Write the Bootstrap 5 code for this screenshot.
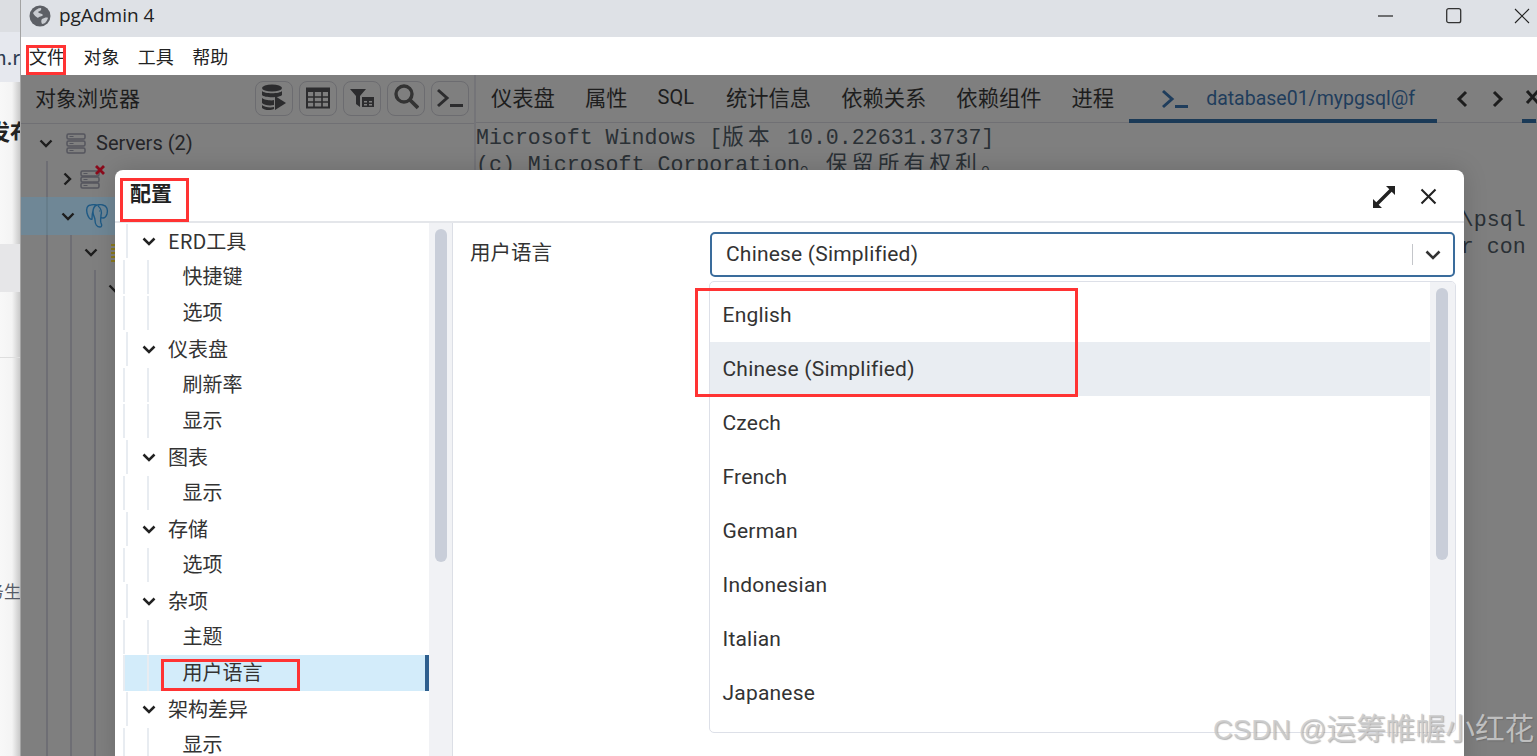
<!DOCTYPE html>
<html lang="zh-CN">
<head>
<meta charset="utf-8">
<title>pgAdmin 4</title>
<link rel="stylesheet" href="https://cdn.jsdelivr.net/npm/bootstrap@5.3.0/dist/css/bootstrap.min.css">
<style>
html,body{height:756px;overflow:hidden;}
body{font-family:Roboto,"Noto Sans CJK SC",sans-serif;color:#222;background:#fff;}
.pg-stage{height:756px;width:1537px;position:relative;overflow:hidden;}
.pg-side{width:20px;flex:none;overflow:hidden;background:linear-gradient(90deg,#f8f8f8 0,#f4f4f4 60%,#c9c9c9 100%);}
.pg-side-a{height:32px;background:#dcdee2;}
.pg-side-b{height:50px;background:#e6e8ee;font-size:20px;color:#2c3c50;line-height:50px;}
.pg-side-c{height:162px;padding-top:32px;font-size:22px;font-weight:700;color:#222;}
.pg-side-c span{margin-right:-12px;}
.pg-side-d{height:48px;background:#e6e6e8;}
.pg-side-e{height:66px;border-bottom:1px solid #dedede;}
.pg-side-f{padding-top:219px;font-size:17px;color:#555a66;line-height:28px;}
.pg-side-f span{margin-right:-1px;}
.pg-clip{white-space:nowrap;display:flex;justify-content:flex-end;font-family:"Noto Sans CJK SC",sans-serif;}
.pg-win{width:1517px;flex:none;border-left:1px solid #a3a3a3;}
.pg-title{height:37px;background:#dee1e6;padding-bottom:6px;}
.pg-title-text{font-size:19px;margin-left:8px;color:#222;font-family:"Open Sans",sans-serif;}
.pg-ctrl{margin-right:0;}
.pg-menu{height:38px;background:#fff;font-size:18px;padding-left:8px;gap:18.4px;color:#222;font-family:"Noto Sans CJK SC",sans-serif;}
.pg-dark{height:681px;background:#7f7f7f;color:#1d1d1d;}
.pg-left{width:455px;flex:none;border-right:2px solid #747478;}
.pg-phead{height:49px;border-bottom:1px solid #707074;padding:0 5px 2px 14px;}
.pg-phead-t{font-size:21px;font-family:"Noto Sans CJK SC",sans-serif;color:#1d1d1d;}
.pg-tool{width:38px;height:35px;padding:0;border:1px solid #6c6c70;border-radius:8px;background:transparent;margin-left:6px;display:flex;align-items:center;justify-content:center;}
.pg-otree{font-size:20px;color:#252528;padding-top:1px;}
.pg-orow{height:36px;display:flex;align-items:center;flex:none;position:relative;}
.pg-orow-sel{background:#6f8796;height:38px;}
.pg-ind{width:24px;flex:none;align-self:stretch;border-left:2px solid #6e6e74;}
.pg-ind0{width:25px;flex:none;}
.pg-fill{flex:1;align-items:stretch;height:auto;}
.pg-tabs{height:48px;border-bottom:1px solid #707074;padding-left:15px;font-family:"Noto Sans CJK SC",sans-serif;font-size:21.3px;}
.pg-tab{color:#1d1d1d;padding:0;margin-right:30px;line-height:46px;margin-top:-4px;}
.pg-tab-latin{font-family:Roboto,sans-serif;font-size:20px;margin-right:32px;}
.pg-tab-on{width:308px;margin-left:-15px;margin-right:19px;padding-left:32px;padding-top:5px;height:48px;border-bottom:4px solid #1b3a57;color:#1f3d5c;font-family:Roboto,sans-serif;font-size:19.5px;display:flex;align-items:center;white-space:nowrap;overflow:hidden;flex:none;}
.pg-tabx{flex:none;width:14px;height:48px;border-bottom:4px solid #1b3a57;display:flex;align-items:center;margin-left:-2px;}
.pg-term{font-family:"Liberation Mono",monospace;font-size:21.6px;line-height:27.2px;white-space:pre;color:#2a3035;margin:2px 0 0;overflow:hidden;height:200px;background:transparent;}
.pg-term-cjk{letter-spacing:4.3px;font-family:"Noto Sans CJK SC",monospace;line-height:0;}
.pg-dlg{position:absolute;left:115px;top:170px;width:1349px;height:600px;background:#fff;border-radius:8px 8px 0 0;box-shadow:0 0 24px rgba(0,0,0,.16);}
.pg-dhead{height:53px;border-bottom:2px solid #e4e6ea;padding:2px 27px 0 15px;}
.pg-dhead-t{font-size:21px;font-weight:700;color:#222;font-family:"Noto Sans CJK SC",sans-serif;line-height:1;margin-top:-8px;}
.pg-dtree{width:314px;flex:none;font-size:20px;font-family:"Noto Sans CJK SC",Roboto,sans-serif;color:#333;}
.pg-drow{height:36px;display:flex;align-items:center;white-space:nowrap;}
.pg-dp{padding-left:27px;gap:12px;background:linear-gradient(#e8ecf1,#e8ecf1) 11px 1px/2px 34px no-repeat;}
.pg-dc{padding-left:67.500px;padding-bottom:2px;background:linear-gradient(#e8ecf1,#e8ecf1) 8px 1px/2px 34px no-repeat,linear-gradient(#e8ecf1,#e8ecf1) 32px 1px/2px 34px no-repeat;}
.pg-dsel{background:linear-gradient(#e8ecf1,#e8ecf1) 8px 0/2px 36px no-repeat,linear-gradient(#e8ecf1,#e8ecf1) 32px 0/2px 36px no-repeat,linear-gradient(#d3ecfa,#d3ecfa) 9px 0/100% 100% no-repeat;border-right:4px solid #2e5f8e;color:#333;}
.pg-track{width:24px;flex:none;background:#f1f2f5;border-right:1px solid #dcdfe6;padding:6px 5px 0 6px;}
.pg-thumb{width:12px;background:#c9ced9;border-radius:6px;}
.pg-pane{flex:1;position:relative;padding:9px 9px 0 17px;}
.pg-lbl{width:240px;flex:none;font-size:20.5px;line-height:36px;margin-top:1px;color:#333;font-family:"Noto Sans CJK SC",sans-serif;}
.pg-sel{width:745px;height:45px;border:2px solid #3a6c9c;border-radius:5px;font-size:21px;letter-spacing:.2px;color:#333;padding:0 0 0 14px;margin-left:0;}
.pg-sel-sep{width:1px;height:21px;background:#c4c6ca;margin-right:12px;}
.pg-sel-chev{margin-right:12px;}
.pg-drop{position:absolute;left:256px;top:58px;width:747px;height:452px;border:1px solid #dde0e8;border-radius:5px;background:#fff;overflow:hidden;padding-top:6px;}
.pg-opts{width:721px;flex:none;}
.pg-opt{height:54px;padding:0 0 0 12.500px;border:0;font-size:21px;letter-spacing:.2px;line-height:54px;color:#333;background:#fff;border-radius:0!important;}
.pg-opt-on{background:#e9edf2;}
.pg-droptrack{position:absolute;right:0;top:0;bottom:0;width:25px;background:#f1f2f5;padding:6px 7px 0 6px;}
.pg-mark{position:absolute;border:3px solid #f33;pointer-events:none;}
.pg-mk1{left:26px;top:45px;width:40px;height:30px;}
.pg-mk2{left:120px;top:178px;width:69px;height:44px;}
.pg-mk3{left:161px;top:659px;width:139px;height:32px;}
.pg-mk4{left:695px;top:288px;width:383px;height:109px;}
.pg-wm{position:absolute;left:1213px;top:708px;font-size:29.7px;line-height:42px;color:rgba(205,205,205,.85);text-shadow:1px 1px 1px rgba(90,90,90,.45);white-space:nowrap;font-family:"Liberation Sans","Noto Sans CJK SC",sans-serif;pointer-events:none;}
.pg-wm span{font-size:27.5px;}
</style>
</head>
<body>
<div class="pg-stage d-flex">
  <div class="pg-side d-flex flex-column">
    <div class="pg-side-a"></div>
    <div class="pg-side-b pg-clip">n.r</div>
    <div class="pg-side-c pg-clip"><span>发布</span></div>
    <div class="pg-side-d"></div>
    <div class="pg-side-e"></div>
    <div class="pg-side-f pg-clip"><span>务生</span></div>
  </div>
  <div class="pg-win d-flex flex-column">
    <div class="pg-title d-flex align-items-center">
      <svg width="22" height="22" viewBox="0 0 22 22" class="ms-2"><circle cx="11" cy="11" r="10.5" fill="#5d6066"/><path d="M4 8c2-3 5-5 8-5 1 2-1 3-3 4 1 2 4 1 5 3-1 2-4 1-5 3-2-1-4-3-5-5zM13 14c2-1 5-2 6-1-1 3-3 6-6 6-1-2-1-4 0-5z" fill="#c9ccd1"/></svg>
      <span class="pg-title-text">pgAdmin 4</span>
      <div class="ms-auto pg-ctrl d-flex align-items-center">
        <svg width="16" height="16" viewBox="0 0 16 16" style="margin-right:52px"><path d="M0 8h15" stroke="#222" stroke-width="1.2"/></svg>
        <svg width="16" height="16" viewBox="0 0 16 16" style="margin-right:52px"><rect x=".7" y=".7" width="14" height="14" rx="2" fill="none" stroke="#333" stroke-width="1.3"/></svg>
        <svg width="16" height="16" viewBox="0 0 16 16" style="margin-right:7px"><path d="M1 1l14 14M15 1L1 15" stroke="#222" stroke-width="1.1"/></svg>
      </div>
    </div>
    <div class="pg-menu d-flex align-items-center">
      <span>文件</span><span>对象</span><span>工具</span><span>帮助</span>
    </div>
    <div class="pg-dark d-flex">
      <div class="pg-left d-flex flex-column">
        <div class="pg-phead d-flex align-items-center">
          <span class="pg-phead-t me-auto">对象浏览器</span>
          <button class="btn pg-tool" type="button"><svg width="26" height="28" viewBox="0 0 26 28" fill="#2c2c2e"><ellipse cx="11" cy="4" rx="10" ry="3.6"/><path d="M1 7c2 3 18 3 20 0v4c-2 3-18 3-20 0zM1 14c2 2 10 3 12 2v5c-5 1-10 0-12-2zM1 21c2 2 8 3 12 2v2c-4 2-10 1-12-1z"/><path d="M14 12l11 7-11 7z"/></svg></button>
          <button class="btn pg-tool" type="button"><svg width="24" height="22" viewBox="0 0 24 22"><rect x="1" y="1.500" width="22" height="19" fill="none" stroke="#2c2c2e" stroke-width="2"/><path d="M1 3h22" stroke="#2c2c2e" stroke-width="4"/><path d="M1 10h22M1 15h22M8 5v15M16 5v15" stroke="#2c2c2e" stroke-width="1.6"/></svg></button>
          <button class="btn pg-tool" type="button"><svg width="24" height="20" viewBox="0 0 24 20" fill="#2c2c2e"><path d="M0 1h16l-6 7v11l-4-3V8z"/><rect x="12" y="9" width="12" height="10" fill="#7f7f7f"/><path d="M12 9h12v10H12zM14 13v1.500h3V13zm5 0v1.500h3V13zm-5 3v1.500h3V16zm5 0v1.500h3V16z" fill-rule="evenodd"/></svg></button>
          <button class="btn pg-tool" type="button"><svg width="26" height="28" viewBox="0 0 26 28"><circle cx="11" cy="10" r="8" fill="none" stroke="#333" stroke-width="3.400"/><path d="M17 16l8 8" stroke="#333" stroke-width="3.800"/></svg></button>
          <button class="btn pg-tool" type="button"><svg width="28" height="22" viewBox="0 0 28 22" fill="none" stroke="#2c2c2e"><path d="M2 3l9 8-9 8" stroke-width="3"/><path d="M14 18.500h13" stroke-width="3"/></svg></button>
        </div>
        <div class="pg-otree d-flex flex-column flex-grow-1">
          <div class="pg-orow mt-0">
            <span class="pg-ind0"></span>
            <svg width="14" height="9" viewBox="0 0 14 9" style="margin-left:-7px"><path d="M1.500 1.500L7 7l5.500-5.500" fill="none" stroke="#1d1d1d" stroke-width="2.400"/></svg>
            <svg width="20" height="21" viewBox="0 0 20 21" style="margin-left:13px" fill="none" stroke="#55565e" stroke-width="1.500"><rect x="1" y="1" width="18" height="5" rx="1.500"/><rect x="1" y="8" width="18" height="5" rx="1.500"/><rect x="1" y="15" width="18" height="5" rx="1.500"/><path d="M3.500 3.500h4M3.500 10.500h4M3.500 17.500h4" stroke-width="1"/></svg>
            <span style="margin-left:10px">Servers (2)</span>
          </div>
          <div class="pg-orow">
            <span class="pg-ind0"></span><span class="pg-ind"></span>
            <svg width="9" height="14" viewBox="0 0 9 14" style="margin-left:-7px"><path d="M1.500 1.500L7 7l-5.500 5.500" fill="none" stroke="#1d1d1d" stroke-width="2.400"/></svg>
            <svg width="26" height="25" viewBox="0 0 26 25" style="margin-left:8px;margin-top:-3px" fill="none" stroke="#55565e" stroke-width="1.500"><rect x="1" y="6" width="18" height="5" rx="1.500"/><rect x="1" y="12" width="18" height="5" rx="1.500"/><rect x="1" y="18" width="18" height="5" rx="1.500"/><path d="M3.500 8.500h4M3.500 14.500h4M3.500 20.500h4" stroke-width="1"/><path d="M16 1l8 8M24 1l-8 8" stroke="#8b0b1c" stroke-width="2.800"/></svg>
          </div>
          <div class="pg-orow pg-orow-sel">
            <span class="pg-ind0"></span><span class="pg-ind" style="border-color:#667d8b"></span>
            <svg width="14" height="9" viewBox="0 0 14 9" style="margin-left:-9px"><path d="M1.500 1.500L7 7l5.500-5.500" fill="none" stroke="#1d1d1d" stroke-width="2.400"/></svg>
            <svg width="24" height="26" viewBox="0 0 24 26" style="margin-left:10px" fill="none" stroke="#1f5a85" stroke-width="1.400"><path d="M6 2C2 2 1 6 2 10c1 4 3 7 5 6 0-3 0-5 1-8M6 2c2-1 4 0 6 0s4-1 6 0c4 1 5 5 4 9-1 3-2 4-4 4-1 0-2 0-2-1M12 2c-3 1-4 4-4 7 0 4 2 5 2 8 0 4 2 7 5 7 2 0 2-2 1-4-1-3 0-5 0-8 1-3 0-7-3-9M14 8h.6"/></svg>
          </div>
          <div class="pg-orow" style="height:35px">
            <span class="pg-ind0"></span><span class="pg-ind"></span><span class="pg-ind" style="width:14px"></span>
            <svg width="14" height="9" viewBox="0 0 14 9"><path d="M1.500 1.500L7 7l5.500-5.500" fill="none" stroke="#1d1d1d" stroke-width="2.400"/></svg>
            <svg width="10" height="20" viewBox="0 0 10 20" style="margin-left:12px"><path d="M1 2h8M1 6h8M1 10h8M1 14h8M1 18h8" stroke="#8a7a1e" stroke-width="2.200"/></svg>
          </div>
          <div class="pg-orow">
            <span class="pg-ind0"></span><span class="pg-ind"></span><span class="pg-ind"></span><span class="pg-ind" style="width:14px"></span>
            <svg width="14" height="9" viewBox="0 0 14 9"><path d="M1.500 1.500L7 7l5.500-5.500" fill="none" stroke="#1d1d1d" stroke-width="2.400"/></svg>
          </div>
          <div class="pg-orow pg-fill">
            <span class="pg-ind0"></span><span class="pg-ind"></span><span class="pg-ind"></span><span class="pg-ind"></span>
          </div>
        </div>
      </div>
      <div class="flex-grow-1 d-flex flex-column overflow-hidden">
        <nav class="pg-tabs d-flex align-items-center flex-nowrap">
          <span class="pg-tab">仪表盘</span>
          <span class="pg-tab">属性</span>
          <span class="pg-tab pg-tab-latin">SQL</span>
          <span class="pg-tab">统计信息</span>
          <span class="pg-tab">依赖关系</span>
          <span class="pg-tab">依赖组件</span>
          <span class="pg-tab">进程</span>
          <span class="pg-tab-on"><svg width="28" height="20" viewBox="0 0 28 20" fill="none" stroke="#1f3d5c" style="margin-right:17px;flex:none"><path d="M2 2l9 8-9 8" stroke-width="3"/><path d="M14 17.500h13" stroke-width="3"/></svg>database01/mypgsql@f</span>
          <svg width="12" height="18" viewBox="0 0 12 18" style="flex:none;margin-right:24px"><path d="M10 2L3 9l7 7" fill="none" stroke="#1d1d1d" stroke-width="3"/></svg>
          <svg width="12" height="18" viewBox="0 0 12 18" style="flex:none;margin-right:20px"><path d="M2 2l7 7-7 7" fill="none" stroke="#1d1d1d" stroke-width="3"/></svg>
          <span class="pg-tabx"><svg width="16" height="16" viewBox="0 0 16 16" style="flex:none;margin-left:3px"><path d="M2 2l11 12M13 2L2 14" stroke="#1d1d1d" stroke-width="3"/></svg></span>
        </nav>
        <pre class="pg-term">Microsoft Windows [<span class="pg-term-cjk">版本</span> 10.0.22631.3737]
(c) Microsoft Corporation<span class="pg-term-cjk">。保留所有权利。</span>

                                                                            \psql
                                                                            r con</pre>
      </div>
    </div>
  </div>

  <div class="pg-dlg d-flex flex-column">
    <div class="pg-dhead d-flex align-items-center">
      <span class="pg-dhead-t me-auto">配置</span>
      <svg width="24" height="24" viewBox="0 0 24 24" style="margin-right:24px"><path d="M14 1h9v9l-3.300-3.300L6.700 19.700 10 23H1v-9l3.300 3.300L17.300 4.300z" fill="#222"/></svg>
      <svg width="17" height="17" viewBox="0 0 17 17"><path d="M1.500 1.500l14 14M15.500 1.500l-14 14" stroke="#222" stroke-width="2.100"/></svg>
    </div>
    <div class="d-flex flex-grow-1 overflow-hidden">
      <div class="pg-dtree">
        <div class="pg-drow pg-dp"><svg width="14" height="9" viewBox="0 0 14 9"><path d="M1.500 1.500L7 7l5.500-5.500" fill="none" stroke="#222" stroke-width="2.500"/></svg><span>ERD工具</span></div>
        <div class="pg-drow pg-dc">快捷键</div>
        <div class="pg-drow pg-dc">选项</div>
        <div class="pg-drow pg-dp"><svg width="14" height="9" viewBox="0 0 14 9"><path d="M1.500 1.500L7 7l5.500-5.500" fill="none" stroke="#222" stroke-width="2.500"/></svg><span>仪表盘</span></div>
        <div class="pg-drow pg-dc">刷新率</div>
        <div class="pg-drow pg-dc">显示</div>
        <div class="pg-drow pg-dp"><svg width="14" height="9" viewBox="0 0 14 9"><path d="M1.500 1.500L7 7l5.500-5.500" fill="none" stroke="#222" stroke-width="2.500"/></svg><span>图表</span></div>
        <div class="pg-drow pg-dc">显示</div>
        <div class="pg-drow pg-dp"><svg width="14" height="9" viewBox="0 0 14 9"><path d="M1.500 1.500L7 7l5.500-5.500" fill="none" stroke="#222" stroke-width="2.500"/></svg><span>存储</span></div>
        <div class="pg-drow pg-dc">选项</div>
        <div class="pg-drow pg-dp"><svg width="14" height="9" viewBox="0 0 14 9"><path d="M1.500 1.500L7 7l5.500-5.500" fill="none" stroke="#222" stroke-width="2.500"/></svg><span>杂项</span></div>
        <div class="pg-drow pg-dc">主题</div>
        <div class="pg-drow pg-dc pg-dsel">用户语言</div>
        <div class="pg-drow pg-dp"><svg width="14" height="9" viewBox="0 0 14 9"><path d="M1.500 1.500L7 7l5.500-5.500" fill="none" stroke="#222" stroke-width="2.500"/></svg><span>架构差异</span></div>
        <div class="pg-drow pg-dc">显示</div>
      </div>
      <div class="pg-track"><div class="pg-thumb" style="height:333px"></div></div>
      <div class="pg-pane d-flex align-items-start">
        <div class="pg-lbl">用户语言</div>
        <div class="pg-sel d-flex align-items-center">
          <span class="me-auto">Chinese (Simplified)</span>
          <span class="pg-sel-sep"></span>
          <svg class="pg-sel-chev" width="16" height="10" viewBox="0 0 16 10"><path d="M1.500 1.500L8 8l6.500-6.500" fill="none" stroke="#333" stroke-width="2.600"/></svg>
        </div>
        <div class="pg-drop">
          <div class="list-group pg-opts">
            <div class="list-group-item pg-opt">English</div>
            <div class="list-group-item pg-opt pg-opt-on">Chinese (Simplified)</div>
            <div class="list-group-item pg-opt">Czech</div>
            <div class="list-group-item pg-opt">French</div>
            <div class="list-group-item pg-opt">German</div>
            <div class="list-group-item pg-opt">Indonesian</div>
            <div class="list-group-item pg-opt">Italian</div>
            <div class="list-group-item pg-opt">Japanese</div>
          </div>
          <div class="pg-droptrack"><div class="pg-thumb" style="height:272px"></div></div>
        </div>
      </div>
    </div>
  </div>

  <div class="pg-mark pg-mk1"></div>
  <div class="pg-mark pg-mk2"></div>
  <div class="pg-mark pg-mk3"></div>
  <div class="pg-mark pg-mk4"></div>
  <div class="pg-wm"><span>CSDN @</span>运筹帷幄小红花</div>
</div>
<script src="https://cdn.jsdelivr.net/npm/bootstrap@5.3.0/dist/js/bootstrap.bundle.min.js"></script>
</body>
</html>
